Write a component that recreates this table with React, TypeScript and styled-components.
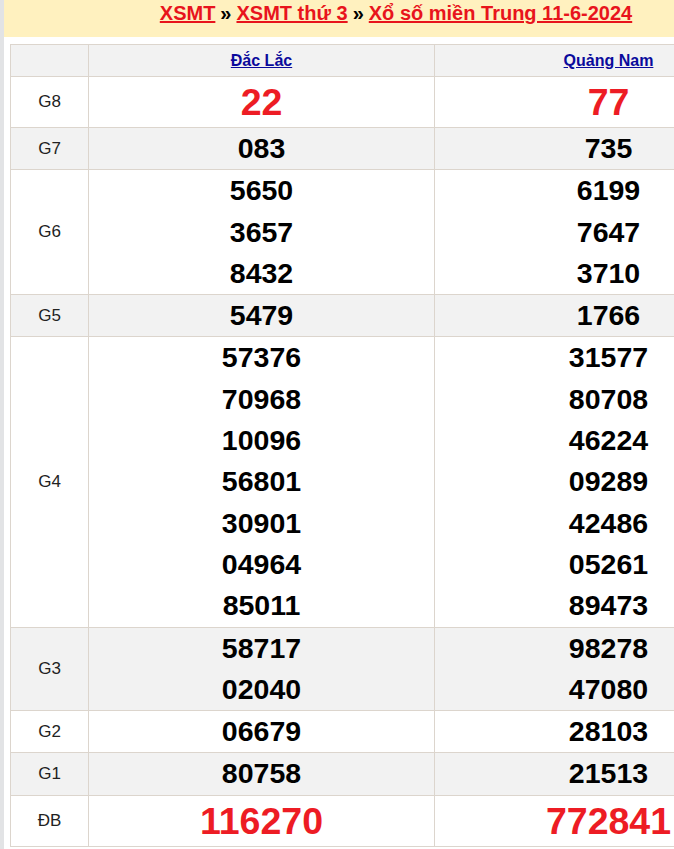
import React from "react";
import styled, { createGlobalStyle } from "styled-components";

const Global = createGlobalStyle`
  html, body { margin: 0; padding: 0; overflow: hidden; }
  body { background: #e2e3e5; font-family: "Liberation Sans", Arial, sans-serif; }
`;

const Page = styled.div`
  margin-left: 4px;
  width: 784px;
  background: #fff;
  padding-bottom: 20px;
`;

const Header = styled.div`
  height: 37px;
  background: #fff1bf;
  text-align: center;
  line-height: 26px;
  font-size: 20px;
  font-weight: bold;
  color: #000;
`;

const Crumb = styled.a`
  color: #e8141c;
  text-decoration: underline;
`;

const Sep = styled.span`
  margin: 0 5px;
`;

const Table = styled.table`
  margin: 7px 6px 0;
  width: 772px;
  border-collapse: collapse;
  table-layout: fixed;
`;

const HeadCell = styled.th`
  background: #f2f2f2;
  border: 1px solid #dcd5cd;
  height: 31px;
  padding: 0;
  font-size: 16px;
  font-weight: bold;
  text-align: center;
  vertical-align: middle;
`;

const Province = styled.a`
  color: #0a0a9c;
  text-decoration: underline;
`;

const Row = styled.tr<{ $alt: boolean }>`
  background: ${(p) => (p.$alt ? "#f2f2f2" : "#fff")};
`;

const Label = styled.td`
  border: 1px solid #dcd5cd;
  padding: 0;
  text-align: center;
  vertical-align: middle;
  font-size: 17px;
  color: #222;
`;

const Cell = styled.td`
  border: 1px solid #dcd5cd;
  padding: 0;
  text-align: center;
  vertical-align: middle;
`;

const Num = styled.div<{ $big: boolean }>`
  font-weight: bold;
  font-size: ${(p) => (p.$big ? "37.5px" : "28.5px")};
  line-height: ${(p) => (p.$big ? "50px" : "41.3px")};
  color: ${(p) => (p.$big ? "#ed1c24" : "#000")};
`;

type Prize = { label: string; a: string[]; b: string[]; big?: boolean };

const prizes: Prize[] = [
  { label: "G8", a: ["22"], b: ["77"], big: true },
  { label: "G7", a: ["083"], b: ["735"] },
  { label: "G6", a: ["5650", "3657", "8432"], b: ["6199", "7647", "3710"] },
  { label: "G5", a: ["5479"], b: ["1766"] },
  {
    label: "G4",
    a: ["57376", "70968", "10096", "56801", "30901", "04964", "85011"],
    b: ["31577", "80708", "46224", "09289", "42486", "05261", "89473"],
  },
  { label: "G3", a: ["58717", "02040"], b: ["98278", "47080"] },
  { label: "G2", a: ["06679"], b: ["28103"] },
  { label: "G1", a: ["80758"], b: ["21513"] },
  { label: "ĐB", a: ["116270"], b: ["772841"], big: true },
];

export default function App() {
  return (
    <>
      <Global />
      <Page>
        <Header>
          <Crumb href="#">XSMT</Crumb>
          <Sep>»</Sep>
          <Crumb href="#">XSMT thứ 3</Crumb>
          <Sep>»</Sep>
          <Crumb href="#">Xổ số miền Trung 11-6-2024</Crumb>
        </Header>
        <Table>
          <colgroup>
            <col style={{ width: 78 }} />
            <col style={{ width: 346 }} />
            <col style={{ width: 348 }} />
          </colgroup>
          <thead>
            <tr>
              <HeadCell />
              <HeadCell>
                <Province href="#">Đắc Lắc</Province>
              </HeadCell>
              <HeadCell>
                <Province href="#">Quảng Nam</Province>
              </HeadCell>
            </tr>
          </thead>
          <tbody>
            {prizes.map((p, i) => (
              <Row key={p.label} $alt={i % 2 === 1}>
                <Label>{p.label}</Label>
                <Cell>
                  {p.a.map((n, j) => (
                    <Num key={j} $big={!!p.big}>
                      {n}
                    </Num>
                  ))}
                </Cell>
                <Cell>
                  {p.b.map((n, j) => (
                    <Num key={j} $big={!!p.big}>
                      {n}
                    </Num>
                  ))}
                </Cell>
              </Row>
            ))}
          </tbody>
        </Table>
      </Page>
    </>
  );
}
